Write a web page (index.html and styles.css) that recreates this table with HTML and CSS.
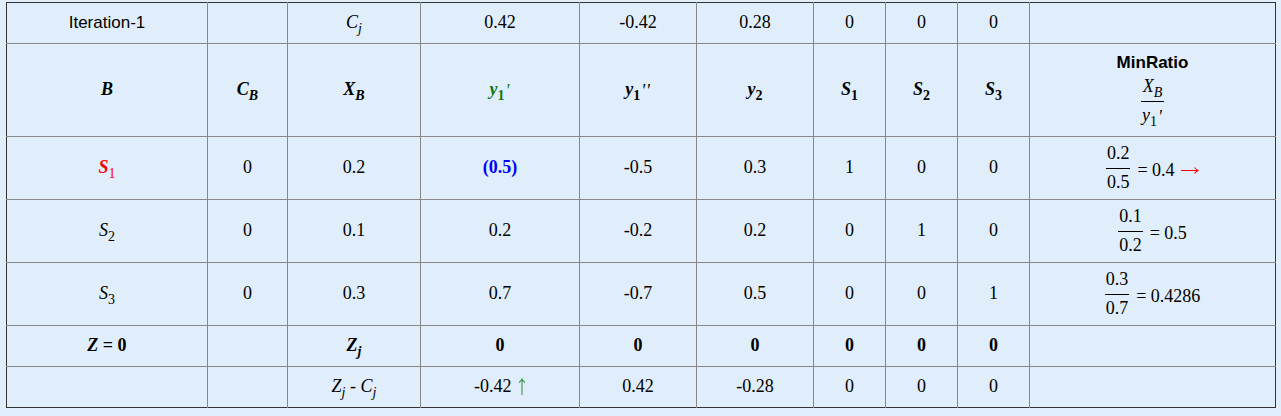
FILE: index.html
```html
<!DOCTYPE html>
<html>
<head>
<meta charset="utf-8">
<link rel="stylesheet" href="styles.css">
</head>
<body>
<table class="tab">
  <colgroup>
    <col class="c-b"><col class="c-cb"><col class="c-xb"><col class="c-y1"><col class="c-y"><col class="c-y"><col class="c-s"><col class="c-s"><col class="c-s"><col class="c-mr">
  </colgroup>
  <tr class="row-s">
    <td class="sans">Iteration-1</td>
    <td></td>
    <td><i>C</i><sub><i>j</i></sub></td>
    <td>0.42</td>
    <td>-0.42</td>
    <td>0.28</td>
    <td>0</td>
    <td>0</td>
    <td>0</td>
    <td></td>
  </tr>
  <tr class="row-h">
    <td class="b"><i>B</i></td>
    <td class="b"><i>C</i><sub><i>B</i></sub></td>
    <td class="b"><i>X</i><sub><i>B</i></sub></td>
    <td class="b green"><i>y</i><sub>1</sub><span class="pr">'</span></td>
    <td class="b"><i>y</i><sub>1</sub><span class="pr">''</span></td>
    <td class="b"><i>y</i><sub>2</sub></td>
    <td class="b"><i>S</i><sub>1</sub></td>
    <td class="b"><i>S</i><sub>2</sub></td>
    <td class="b"><i>S</i><sub>3</sub></td>
    <td>
      <div class="mr">
        <span class="sans b">MinRatio</span>
        <span class="frac hfrac"><span class="num"><i>X</i><sub><i>B</i></sub></span><span class="den"><i>y</i><sub>1</sub><span class="pr">'</span></span></span>
      </div>
    </td>
  </tr>
  <tr class="row-d">
    <td class="b red"><i>S</i><sub class="nb">1</sub></td>
    <td>0</td>
    <td>0.2</td>
    <td class="b blue">(0.5)</td>
    <td>-0.5</td>
    <td>0.3</td>
    <td>1</td>
    <td>0</td>
    <td>0</td>
    <td>
      <span class="ratio">
        <span class="frac"><span class="num">0.2</span><span class="den">0.5</span></span>
        <span class="eq">= 0.4 <svg class="rarrow" width="18" height="10" viewBox="0 0 18 10"><path d="M0 5.5H17M13.5 2.5Q15 4.5 17 5.5Q15 6.5 13.5 8.5" stroke="#ff0000" stroke-width="1.1" fill="none"/></svg></span>
      </span>
    </td>
  </tr>
  <tr class="row-d">
    <td><i>S</i><sub>2</sub></td>
    <td>0</td>
    <td>0.1</td>
    <td>0.2</td>
    <td>-0.2</td>
    <td>0.2</td>
    <td>0</td>
    <td>1</td>
    <td>0</td>
    <td>
      <span class="ratio">
        <span class="frac"><span class="num">0.1</span><span class="den">0.2</span></span>
        <span class="eq">= 0.5</span>
      </span>
    </td>
  </tr>
  <tr class="row-d">
    <td><i>S</i><sub>3</sub></td>
    <td>0</td>
    <td>0.3</td>
    <td>0.7</td>
    <td>-0.7</td>
    <td>0.5</td>
    <td>0</td>
    <td>0</td>
    <td>1</td>
    <td>
      <span class="ratio">
        <span class="frac"><span class="num">0.3</span><span class="den">0.7</span></span>
        <span class="eq">= 0.4286</span>
      </span>
    </td>
  </tr>
  <tr class="row-s">
    <td class="b"><i>Z</i> = 0</td>
    <td></td>
    <td class="b"><i>Z</i><sub><i>j</i></sub></td>
    <td class="b">0</td>
    <td class="b">0</td>
    <td class="b">0</td>
    <td class="b">0</td>
    <td class="b">0</td>
    <td class="b">0</td>
    <td></td>
  </tr>
  <tr class="row-s">
    <td></td>
    <td></td>
    <td><i>Z</i><sub><i>j</i></sub> - <i>C</i><sub><i>j</i></sub></td>
    <td>-0.42 <svg class="uarrow" width="8" height="17" viewBox="0 0 8 17"><path d="M4 17V1M1 4.5Q3 3 4 1Q5 3 7 4.5" stroke="#3a9a4a" stroke-width="1.1" fill="none"/></svg></td>
    <td>0.42</td>
    <td>-0.28</td>
    <td>0</td>
    <td>0</td>
    <td>0</td>
    <td></td>
  </tr>
</table>
</body>
</html>
```

FILE: styles.css
```css
html, body {
  margin: 0;
  background: #e0eefb;
}
body {
  padding: 2px 0 0 6px;
  font-family: "Liberation Serif", "Times New Roman", serif;
  font-size: 18px;
  color: #000;
}
.tab {
  border-collapse: collapse;
  table-layout: fixed;
  width: 1270px;
  border: 1px solid #333;
}
.c-b { width: 201px; }
.c-cb { width: 80px; }
.c-xb { width: 133px; }
.c-y1 { width: 159px; }
.c-y { width: 117px; }
.c-s { width: 72px; }
.c-mr { width: 246px; }
.tab td {
  padding: 0;
  text-align: center;
  vertical-align: middle;
  border-left: 1px solid #888;
  border-top: 1px solid #888;
  white-space: nowrap;
  line-height: 1.2;
}
.tab td:first-child { border-left: none; }
.tab tr:first-child td { border-top: none; }
.row-s td { height: 40px; }
.row-h td { height: 92px; }
.row-d td { height: 62px; }
sub {
  font-size: 14px;
  vertical-align: -5px;
  line-height: 0;
}
.nb { font-weight: normal; }
.pr {
  font-family: "Liberation Serif", serif;
  font-style: italic;
  font-size: 18px;
  vertical-align: -2px;
  line-height: 0;
  font-weight: normal;
  margin-left: 1px;
  letter-spacing: 1px;
}
.sans {
  font-family: "Liberation Sans", Arial, sans-serif;
  font-size: 17px;
}
.b { font-weight: bold; }
.red { color: #ff0000; }
.green { color: #117711; }
.blue { color: #0000ff; }
.mr {
  display: flex;
  flex-direction: column;
  align-items: center;
  gap: 2px;
}
.ratio {
  display: inline-flex;
  align-items: center;
  gap: 7px;
}
.eq {
  padding-top: 6px;
}
.rarrow {
  vertical-align: 1px;
  margin-left: 2px;
}
.uarrow {
  vertical-align: -3px;
  margin-left: 2px;
}
.frac {
  display: inline-flex;
  flex-direction: column;
  align-items: stretch;
  text-align: center;
}
.frac .num {
  padding: 0 1px 3px;
}
.frac .den {
  border-top: 1px solid #000;
  padding: 3px 1px 0;
}
.hfrac .num { padding-bottom: 4px; }
.hfrac .den { padding-top: 3px; }
```
